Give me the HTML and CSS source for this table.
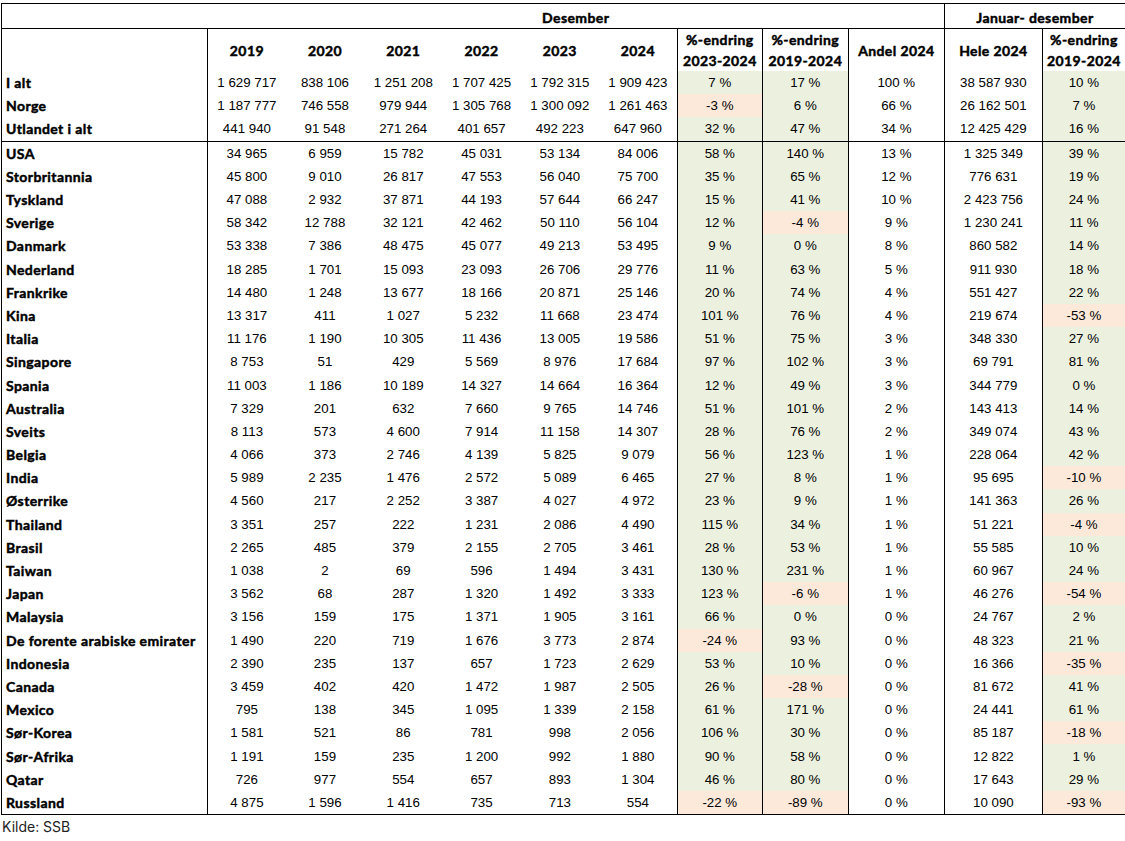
FILE: index.html
```html
<!DOCTYPE html>
<html lang="no">
<head>
<meta charset="utf-8">
<title>Desember</title>
<link rel="stylesheet" href="styles.css">
</head>
<body>
<table class="tbl">
<colgroup>
<col class="c-name"><col class="c-yr"><col class="c-yr"><col class="c-yr"><col class="c-yr"><col class="c-yr"><col class="c-yr"><col class="c-p1"><col class="c-p2"><col class="c-and"><col class="c-hele"><col class="c-last">
</colgroup>
<thead>
<tr class="h1">
<th class="blank"></th>
<th colspan="9" class="grp">Desember</th>
<th colspan="2" class="grp jan">Januar- desember</th>
</tr>
<tr class="h2">
<th class="name-h"></th>
<th>2019</th><th>2020</th><th>2021</th><th>2022</th><th>2023</th><th class="end">2024</th>
<th class="vb">%-endring<br>2023-2024</th>
<th class="vb">%-endring<br>2019-2024</th>
<th class="vb">Andel 2024</th>
<th class="vb">Hele 2024</th>
<th class="vb">%-endring<br>2019-2024</th>
</tr>
</thead>
<tbody>
<tr><td class="n">I alt</td><td>1 629 717</td><td>838 106</td><td>1 251 208</td><td>1 707 425</td><td>1 792 315</td><td class="end">1 909 423</td><td class="g">7 %</td><td class="g">17 %</td><td class="vb">100 %</td><td class="vb">38 587 930</td><td class="g">10 %</td></tr>
<tr><td class="n">Norge</td><td>1 187 777</td><td>746 558</td><td>979 944</td><td>1 305 768</td><td>1 300 092</td><td class="end">1 261 463</td><td class="r">-3 %</td><td class="g">6 %</td><td class="vb">66 %</td><td class="vb">26 162 501</td><td class="g">7 %</td></tr>
<tr class="sep"><td class="n">Utlandet i alt</td><td>441 940</td><td>91 548</td><td>271 264</td><td>401 657</td><td>492 223</td><td class="end">647 960</td><td class="g">32 %</td><td class="g">47 %</td><td class="vb">34 %</td><td class="vb">12 425 429</td><td class="g">16 %</td></tr>
<tr><td class="n">USA</td><td>34 965</td><td>6 959</td><td>15 782</td><td>45 031</td><td>53 134</td><td class="end">84 006</td><td class="g">58 %</td><td class="g">140 %</td><td class="vb">13 %</td><td class="vb">1 325 349</td><td class="g">39 %</td></tr>
<tr><td class="n">Storbritannia</td><td>45 800</td><td>9 010</td><td>26 817</td><td>47 553</td><td>56 040</td><td class="end">75 700</td><td class="g">35 %</td><td class="g">65 %</td><td class="vb">12 %</td><td class="vb">776 631</td><td class="g">19 %</td></tr>
<tr><td class="n">Tyskland</td><td>47 088</td><td>2 932</td><td>37 871</td><td>44 193</td><td>57 644</td><td class="end">66 247</td><td class="g">15 %</td><td class="g">41 %</td><td class="vb">10 %</td><td class="vb">2 423 756</td><td class="g">24 %</td></tr>
<tr><td class="n">Sverige</td><td>58 342</td><td>12 788</td><td>32 121</td><td>42 462</td><td>50 110</td><td class="end">56 104</td><td class="g">12 %</td><td class="r">-4 %</td><td class="vb">9 %</td><td class="vb">1 230 241</td><td class="g">11 %</td></tr>
<tr><td class="n">Danmark</td><td>53 338</td><td>7 386</td><td>48 475</td><td>45 077</td><td>49 213</td><td class="end">53 495</td><td class="g">9 %</td><td class="g">0 %</td><td class="vb">8 %</td><td class="vb">860 582</td><td class="g">14 %</td></tr>
<tr><td class="n">Nederland</td><td>18 285</td><td>1 701</td><td>15 093</td><td>23 093</td><td>26 706</td><td class="end">29 776</td><td class="g">11 %</td><td class="g">63 %</td><td class="vb">5 %</td><td class="vb">911 930</td><td class="g">18 %</td></tr>
<tr><td class="n">Frankrike</td><td>14 480</td><td>1 248</td><td>13 677</td><td>18 166</td><td>20 871</td><td class="end">25 146</td><td class="g">20 %</td><td class="g">74 %</td><td class="vb">4 %</td><td class="vb">551 427</td><td class="g">22 %</td></tr>
<tr><td class="n">Kina</td><td>13 317</td><td>411</td><td>1 027</td><td>5 232</td><td>11 668</td><td class="end">23 474</td><td class="g">101 %</td><td class="g">76 %</td><td class="vb">4 %</td><td class="vb">219 674</td><td class="r">-53 %</td></tr>
<tr><td class="n">Italia</td><td>11 176</td><td>1 190</td><td>10 305</td><td>11 436</td><td>13 005</td><td class="end">19 586</td><td class="g">51 %</td><td class="g">75 %</td><td class="vb">3 %</td><td class="vb">348 330</td><td class="g">27 %</td></tr>
<tr><td class="n">Singapore</td><td>8 753</td><td>51</td><td>429</td><td>5 569</td><td>8 976</td><td class="end">17 684</td><td class="g">97 %</td><td class="g">102 %</td><td class="vb">3 %</td><td class="vb">69 791</td><td class="g">81 %</td></tr>
<tr><td class="n">Spania</td><td>11 003</td><td>1 186</td><td>10 189</td><td>14 327</td><td>14 664</td><td class="end">16 364</td><td class="g">12 %</td><td class="g">49 %</td><td class="vb">3 %</td><td class="vb">344 779</td><td class="g">0 %</td></tr>
<tr><td class="n">Australia</td><td>7 329</td><td>201</td><td>632</td><td>7 660</td><td>9 765</td><td class="end">14 746</td><td class="g">51 %</td><td class="g">101 %</td><td class="vb">2 %</td><td class="vb">143 413</td><td class="g">14 %</td></tr>
<tr><td class="n">Sveits</td><td>8 113</td><td>573</td><td>4 600</td><td>7 914</td><td>11 158</td><td class="end">14 307</td><td class="g">28 %</td><td class="g">76 %</td><td class="vb">2 %</td><td class="vb">349 074</td><td class="g">43 %</td></tr>
<tr><td class="n">Belgia</td><td>4 066</td><td>373</td><td>2 746</td><td>4 139</td><td>5 825</td><td class="end">9 079</td><td class="g">56 %</td><td class="g">123 %</td><td class="vb">1 %</td><td class="vb">228 064</td><td class="g">42 %</td></tr>
<tr><td class="n">India</td><td>5 989</td><td>2 235</td><td>1 476</td><td>2 572</td><td>5 089</td><td class="end">6 465</td><td class="g">27 %</td><td class="g">8 %</td><td class="vb">1 %</td><td class="vb">95 695</td><td class="r">-10 %</td></tr>
<tr><td class="n">Østerrike</td><td>4 560</td><td>217</td><td>2 252</td><td>3 387</td><td>4 027</td><td class="end">4 972</td><td class="g">23 %</td><td class="g">9 %</td><td class="vb">1 %</td><td class="vb">141 363</td><td class="g">26 %</td></tr>
<tr><td class="n">Thailand</td><td>3 351</td><td>257</td><td>222</td><td>1 231</td><td>2 086</td><td class="end">4 490</td><td class="g">115 %</td><td class="g">34 %</td><td class="vb">1 %</td><td class="vb">51 221</td><td class="r">-4 %</td></tr>
<tr><td class="n">Brasil</td><td>2 265</td><td>485</td><td>379</td><td>2 155</td><td>2 705</td><td class="end">3 461</td><td class="g">28 %</td><td class="g">53 %</td><td class="vb">1 %</td><td class="vb">55 585</td><td class="g">10 %</td></tr>
<tr><td class="n">Taiwan</td><td>1 038</td><td>2</td><td>69</td><td>596</td><td>1 494</td><td class="end">3 431</td><td class="g">130 %</td><td class="g">231 %</td><td class="vb">1 %</td><td class="vb">60 967</td><td class="g">24 %</td></tr>
<tr><td class="n">Japan</td><td>3 562</td><td>68</td><td>287</td><td>1 320</td><td>1 492</td><td class="end">3 333</td><td class="g">123 %</td><td class="r">-6 %</td><td class="vb">1 %</td><td class="vb">46 276</td><td class="r">-54 %</td></tr>
<tr><td class="n">Malaysia</td><td>3 156</td><td>159</td><td>175</td><td>1 371</td><td>1 905</td><td class="end">3 161</td><td class="g">66 %</td><td class="g">0 %</td><td class="vb">0 %</td><td class="vb">24 767</td><td class="g">2 %</td></tr>
<tr><td class="n">De forente arabiske emirater</td><td>1 490</td><td>220</td><td>719</td><td>1 676</td><td>3 773</td><td class="end">2 874</td><td class="r">-24 %</td><td class="g">93 %</td><td class="vb">0 %</td><td class="vb">48 323</td><td class="g">21 %</td></tr>
<tr><td class="n">Indonesia</td><td>2 390</td><td>235</td><td>137</td><td>657</td><td>1 723</td><td class="end">2 629</td><td class="g">53 %</td><td class="g">10 %</td><td class="vb">0 %</td><td class="vb">16 366</td><td class="r">-35 %</td></tr>
<tr><td class="n">Canada</td><td>3 459</td><td>402</td><td>420</td><td>1 472</td><td>1 987</td><td class="end">2 505</td><td class="g">26 %</td><td class="r">-28 %</td><td class="vb">0 %</td><td class="vb">81 672</td><td class="g">41 %</td></tr>
<tr><td class="n">Mexico</td><td>795</td><td>138</td><td>345</td><td>1 095</td><td>1 339</td><td class="end">2 158</td><td class="g">61 %</td><td class="g">171 %</td><td class="vb">0 %</td><td class="vb">24 441</td><td class="g">61 %</td></tr>
<tr><td class="n">Sør-Korea</td><td>1 581</td><td>521</td><td>86</td><td>781</td><td>998</td><td class="end">2 056</td><td class="g">106 %</td><td class="g">30 %</td><td class="vb">0 %</td><td class="vb">85 187</td><td class="r">-18 %</td></tr>
<tr><td class="n">Sør-Afrika</td><td>1 191</td><td>159</td><td>235</td><td>1 200</td><td>992</td><td class="end">1 880</td><td class="g">90 %</td><td class="g">58 %</td><td class="vb">0 %</td><td class="vb">12 822</td><td class="g">1 %</td></tr>
<tr><td class="n">Qatar</td><td>726</td><td>977</td><td>554</td><td>657</td><td>893</td><td class="end">1 304</td><td class="g">46 %</td><td class="g">80 %</td><td class="vb">0 %</td><td class="vb">17 643</td><td class="g">29 %</td></tr>
<tr><td class="n">Russland</td><td>4 875</td><td>1 596</td><td>1 416</td><td>735</td><td>713</td><td class="end">554</td><td class="r">-22 %</td><td class="r">-89 %</td><td class="vb">0 %</td><td class="vb">10 090</td><td class="r">-93 %</td></tr>
</tbody>
</table>
<p class="source">Kilde: SSB</p>
</body>
</html>
```
FILE: styles.css
```css
html, body {
  margin: 0;
  padding: 0;
  background: #ffffff;
}
body {
  padding: 3px 0 0 1px;
}
.tbl {
  border-collapse: collapse;
  table-layout: fixed;
  width: 1124px;
  border: 1px solid #000;
  font-family: "Liberation Sans", Arial, sans-serif;
  font-size: 13.3px;
  color: #000;
}
.c-name { width: 206px; }
.c-yr { width: 78.3px; }
.c-p1 { width: 85px; }
.c-p2 { width: 86px; }
.c-and { width: 96px; }
.c-hele { width: 98px; }
.c-last { width: 83px; }

.tbl th, .tbl td {
  padding: 0;
  text-align: center;
  white-space: nowrap;
  overflow: hidden;
}
.tbl th,
.tbl td.n {
  font-family: "Lato", "DejaVu Sans", sans-serif;
  font-weight: 700;
  font-size: 14px;
  letter-spacing: 0.4px;
  -webkit-text-stroke: 0.45px #000;
}
.h1 th {
  height: 22px;
  padding-top: 2px;
  border-bottom: 1px solid #000;
}
.h1 .jan {
  border-left: 1px solid #000;
}
.h2 th {
  height: 42px;
  line-height: 21px;
}
.h2 .name-h {
  border-right: 1px solid #000;
}
.tbl td {
  height: 23.2px;
}
.tbl td.n {
  text-align: left;
  padding-left: 4px;
  border-right: 1px solid #000;
}
.end {
  border-right: 1px solid #000;
}
.vb, .tbl td.g, .tbl td.r {
  border-left: 1px solid #000;
}
.tbl td.g {
  background: #ebf0df;
}
.tbl td.r {
  background: #fce9da;
}
.sep td {
  border-bottom: 1px solid #000;
}
.source {
  margin: 3px 0 0 1px;
  font-family: "Inter", "Noto Sans", sans-serif;
  font-size: 14px;
  color: #222;
}
```
